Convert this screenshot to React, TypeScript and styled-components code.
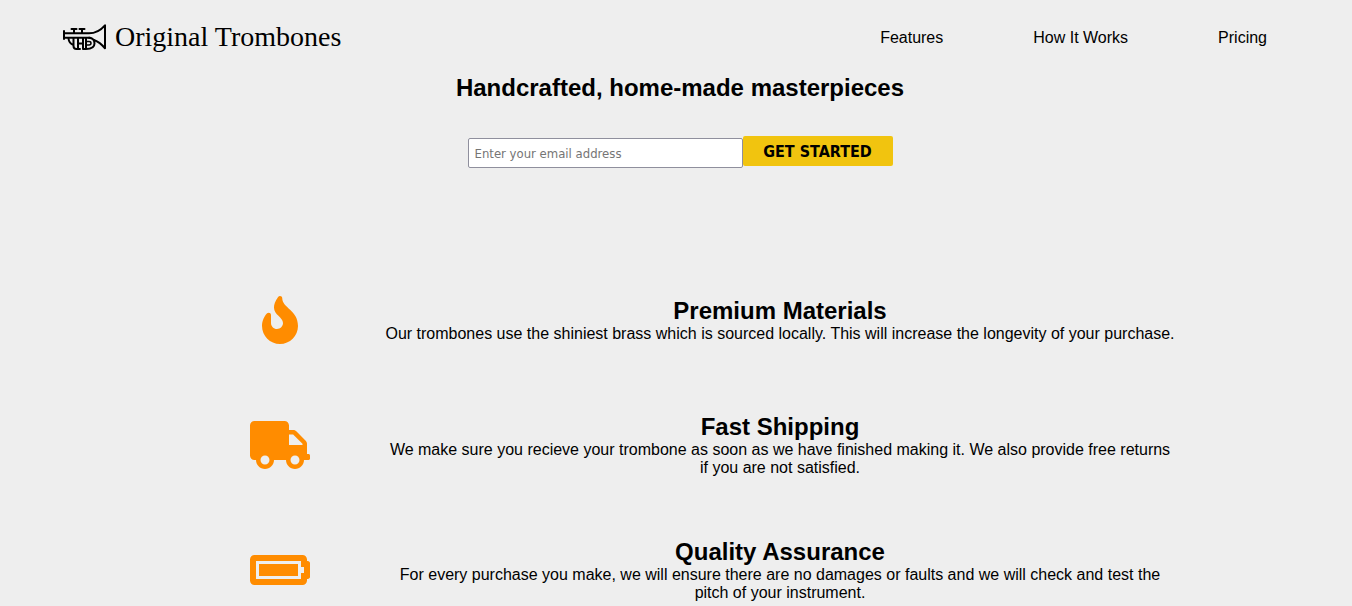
import React from "react";
import styled, { createGlobalStyle } from "styled-components";
import { FaBatteryFull, FaFire, FaTruck } from "react-icons/fa";

const GlobalStyle = createGlobalStyle`
  * {
    box-sizing: border-box;
    margin: 0;
    padding: 0;
  }
  body {
    background: #eeeeee;
    color: #000;
    font: 16px/18px "Liberation Sans", Arial, sans-serif;
  }
`;

const Header = styled.header`
  display: flex;
  align-items: center;
  justify-content: space-between;
  height: 74px;
  padding: 0 85px 0 62px;
`;

const Brand = styled.a`
  display: flex;
  align-items: center;
  gap: 8px;
  color: inherit;
  font: 28px/32px "Liberation Serif", "Times New Roman", serif;
  text-decoration: none;
`;

const Nav = styled.nav`
  display: flex;
  gap: 90px;
  padding-top: 2px;
`;

const NavLink = styled.a`
  color: inherit;
  text-decoration: none;
`;

const Main = styled.main`
  padding-left: 8px;
`;

const Hero = styled.section`
  display: flex;
  flex-direction: column;
  align-items: center;
  gap: 34px;
`;

const Title = styled.h2`
  font-size: 24px;
  line-height: 28px;
`;

const Form = styled.form`
  display: flex;
`;

const Email = styled.input`
  width: 275px;
  height: 30px;
  margin-top: 2px;
  padding: 0 6px;
  border: 1px solid #8f8f9d;
  border-radius: 2px;
  background: #fff;
  font: 13px "DejaVu Sans Condensed", Tahoma, sans-serif;

  &::placeholder {
    color: #757575;
    opacity: 1;
  }
`;

const Submit = styled.button`
  width: 150px;
  height: 30px;
  border: 0;
  border-radius: 2px;
  background: #f1c40f;
  color: #000;
  font: bold 16px "DejaVu Sans Condensed", Tahoma, sans-serif;
`;

const FeatureList = styled.section`
  display: flex;
  flex-direction: column;
  gap: 61px;
  max-width: 1000px;
  margin: 120px auto 0;
`;

const FeatureRow = styled.article`
  display: grid;
  grid-template-columns: 1fr 4fr;
  align-items: center;
  min-height: 64px;
  text-align: center;
`;

const FeatureIcon = styled.div`
  display: flex;
  justify-content: center;
  color: #ff8c00;

  svg {
    width: 60px;
    height: 48px;
  }
`;

const FeatureText = styled.div`
  padding: 0 4px;
`;

const features = [
  {
    icon: <FaFire />,
    title: "Premium Materials",
    text: "Our trombones use the shiniest brass which is sourced locally. This will increase the longevity of your purchase.",
  },
  {
    icon: <FaTruck />,
    title: "Fast Shipping",
    text: "We make sure you recieve your trombone as soon as we have finished making it. We also provide free returns if you are not satisfied.",
  },
  {
    icon: <FaBatteryFull />,
    title: "Quality Assurance",
    text: "For every purchase you make, we will ensure there are no damages or faults and we will check and test the pitch of your instrument.",
  },
];

const TrumpetLogo = () => (
  <svg
    width="45"
    height="28"
    viewBox="0 0 45 28"
    fill="none"
    stroke="#000"
    strokeWidth="2"
    strokeLinecap="round"
    strokeLinejoin="round"
    aria-hidden="true"
  >
    <path d="M2 8v8M2 10.300h25q9 0 16-8v23q-5-6-11-8.300M2 14.700h26" />
    <path d="M9.500 6h5M17.500 6h5M12 6v4M20 6v4" />
    <path d="M6.500 15.500q.5 5 5 6.500M11.500 15v8q0 3 3 3h1.500V15M21 15v11h3V15M16 20.500h5M16 26h2M24 26q8.500-.3 8.500-5.600t-5.500-5.700" />
    <path d="M24 18.500h3q2 0 2 1.700t-2 1.700h-3" strokeWidth="1.500" />
  </svg>
);

export default function App() {
  return (
    <>
      <GlobalStyle />
      <Header>
        <Brand href="#">
          <TrumpetLogo />
          Original Trombones
        </Brand>
        <Nav>
          <NavLink href="#features">Features</NavLink>
          <NavLink href="#how-it-works">How It Works</NavLink>
          <NavLink href="#pricing">Pricing</NavLink>
        </Nav>
      </Header>
      <Main>
        <Hero>
          <Title>Handcrafted, home-made masterpieces</Title>
          <Form>
            <Email type="email" aria-label="Email address" placeholder="Enter your email address" />
            <Submit type="submit">GET STARTED</Submit>
          </Form>
        </Hero>
        <FeatureList id="features">
          {features.map(({ icon, title, text }) => (
            <FeatureRow key={title}>
              <FeatureIcon>{icon}</FeatureIcon>
              <FeatureText>
                <Title>{title}</Title>
                <p>{text}</p>
              </FeatureText>
            </FeatureRow>
          ))}
        </FeatureList>
      </Main>
    </>
  );
}
